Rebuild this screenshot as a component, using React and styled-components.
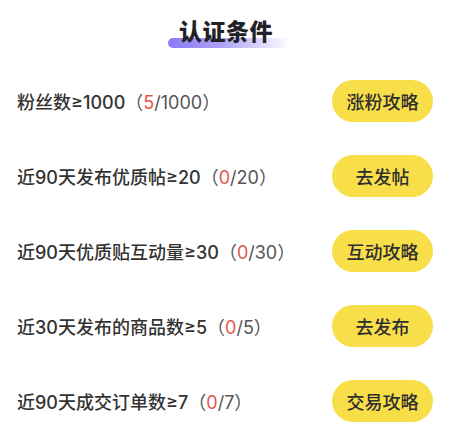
import React from 'react';
import styled, { createGlobalStyle } from 'styled-components';

const GlobalStyle = createGlobalStyle`
  body {
    margin: 0;
    background: #ffffff;
    font-family: "Inter", "Noto Sans CJK SC", sans-serif;
  }
`;

const Wrapper = styled.div`
  width: 452px;
  display: flex;
  flex-direction: column;
`;

const Header = styled.div`
  height: 63px;
  display: flex;
  align-items: flex-start;
  justify-content: center;
  padding-top: 15px;
  box-sizing: border-box;
`;

const Title = styled.h2`
  position: relative;
  margin: 0;
  font-family: "Noto Sans CJK SC", sans-serif;
  font-size: 23px;
  line-height: 30px;
  font-weight: 900;
  color: #222226;
  letter-spacing: 0.5px;
  z-index: 0;

  &::before {
    content: '';
    position: absolute;
    left: -11px;
    right: -18px;
    bottom: -3px;
    height: 10px;
    border-radius: 5px;
    background: linear-gradient(90deg, #8a7af4 0%, #a99df7 40%, rgba(255, 255, 255, 0) 100%);
    z-index: -1;
  }
`;

const List = styled.div`
  display: flex;
  flex-direction: column;
`;

const Row = styled.div`
  height: 75px;
  display: flex;
  align-items: center;
  justify-content: space-between;
  padding: 0 19px 0 17px;
`;

const Label = styled.span`
  font-size: 18px;
  font-weight: 500;
  color: #333333;
`;

const Progress = styled.span`
  font-weight: 400;
  color: #555555;
`;

const Current = styled.span`
  color: #e4574d;
`;

const ActionButton = styled.button`
  width: 101px;
  height: 42px;
  border: none;
  border-radius: 21px;
  background: #f8df4a;
  color: #2e2e2e;
  font-family: "Noto Sans CJK SC", sans-serif;
  font-size: 18px;
  font-weight: 500;
  padding: 0;
  cursor: pointer;
`;

const conditions = [
  { label: '粉丝数≥1000', current: 5, target: 1000, action: '涨粉攻略' },
  { label: '近90天发布优质帖≥20', current: 0, target: 20, action: '去发帖' },
  { label: '近90天优质贴互动量≥30', current: 0, target: 30, action: '互动攻略' },
  { label: '近30天发布的商品数≥5', current: 0, target: 5, action: '去发布' },
  { label: '近90天成交订单数≥7', current: 0, target: 7, action: '交易攻略' },
];

const App = () => (
  <>
    <GlobalStyle />
    <Wrapper>
      <Header>
        <Title>认证条件</Title>
      </Header>
      <List>
        {conditions.map((c) => (
          <Row key={c.label}>
            <Label>
              {c.label}
              <Progress>
                （<Current>{c.current}</Current>/{c.target}）
              </Progress>
            </Label>
            <ActionButton>{c.action}</ActionButton>
          </Row>
        ))}
      </List>
    </Wrapper>
  </>
);

export default App;
